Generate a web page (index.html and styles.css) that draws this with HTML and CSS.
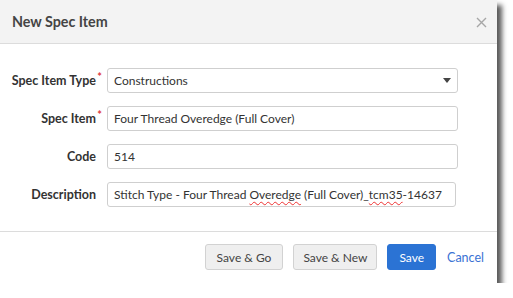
FILE: index.html
```html
<!DOCTYPE html>
<html lang="en">
<head>
    <meta charset="UTF-8">
    <meta name="viewport" content="width=device-width, initial-scale=1.0">
    <title>New Spec Item</title>
    <link rel="stylesheet" href="styles.css">
</head>
<body>
    <div class="dialog">
        <div class="dialog-header">
            <div class="dialog-title">New Spec Item</div>
            <div class="close" title="Close">
                <svg width="11" height="11" viewBox="0 0 11 11">
                    <path d="M1 1 L10 10 M10 1 L1 10" stroke="#a6a6a6" stroke-width="1.4" fill="none"/>
                </svg>
            </div>
        </div>
        <div class="dialog-body">
            <label class="label required">Spec Item Type</label>
            <div class="select">
                <span>Constructions</span>
                <span class="caret"></span>
            </div>

            <label class="label required">Spec Item</label>
            <input class="field" type="text" value="Four Thread Overedge (Full Cover)">

            <label class="label">Code</label>
            <input class="field" type="text" value="514">

            <label class="label">Description</label>
            <div class="field field-desc">Stitch Type - Four Thread <span class="misspelled">Overedge</span> (Full Cover)_<span class="misspelled">tcm35</span>-14637</div>
        </div>
        <div class="dialog-footer">
            <div class="btn">Save &amp; Go</div>
            <div class="btn btn-new">Save &amp; New</div>
            <div class="btn btn-primary">Save</div>
            <a class="cancel" href="#">Cancel</a>
        </div>
    </div>
</body>
</html>
```

FILE: styles.css
```css
body {
    margin: 0;
    background-color: #fff;
    font-family: Lato, "Open Sans", Arial, sans-serif;
    color: #333;
}
.dialog {
    width: 497px;
    height: 283px;
    background-color: #fff;
    box-shadow: 5px 5px 5px rgba(0, 0, 0, 0.65); /* hard shadow bottom-right */
    display: flex;
    flex-direction: column;
}
.dialog-header {
    height: 43px;
    background-color: #f3f3f3;
    border-bottom: 1px solid #dcdcdc;
    display: flex;
    align-items: center;
    justify-content: space-between;
    padding: 0 10px 0 12px;
}
.dialog-title {
    font-size: 14.3px;
    font-weight: bold;
    color: #444;
}
.close {
    display: flex;
    margin-top: 1px;
}
.dialog-body {
    display: grid;
    grid-template-columns: 96px minmax(0, 1fr);
    column-gap: 11px;
    row-gap: 13px;
    align-items: center;
    padding: 24px 39px 24px 0;
    border-bottom: 1px solid #dcdcdc;
}
.label {
    text-align: right;
    font-size: 12.5px;
    font-weight: bold;
    color: #333;
}
.label.required {
    position: relative;
}
.label.required::after {
    content: "*";
    position: absolute;
    right: -6px;
    top: -3px;
    color: #e0393e;
    font-size: 11px;
}
.field,
.select {
    box-sizing: border-box;
    height: 25px;
    width: 100%;
    margin: 0;
    border: 1px solid #cfcfcf;
    border-radius: 3px;
    padding: 0 6px;
    font-family: inherit;
    font-size: 12px;
    color: #333;
    background-color: #fff;
    outline: none;
}
.select {
    display: flex;
    align-items: center;
    justify-content: space-between;
}
.caret {
    width: 0;
    height: 0;
    border-left: 4px solid transparent;
    border-right: 4px solid transparent;
    border-top: 5px solid #444;
}
.field-desc {
    display: flex;
    align-items: center;
    width: calc(100% - 2px);
    white-space: pre;
    overflow: hidden;
}
.misspelled {
    text-decoration: underline wavy #e33;
    text-decoration-thickness: 1px;
    text-underline-offset: 2px;
}
.dialog-footer {
    flex: 1;
    display: flex;
    justify-content: flex-end;
    align-items: flex-start;
    gap: 10px;
    padding: 12px 13px 0 0;
}
.btn {
    box-sizing: border-box;
    height: 26px;
    padding: 0 11px;
    display: flex;
    align-items: center;
    font-size: 12px;
    color: #444;
    background-color: #efefef;
    border: 1px solid #d2d2d2;
    border-radius: 3px;
}
.btn-new {
    padding: 0 9px;
}
.btn-primary {
    background-color: #2b73d4;
    border-color: #2b73d4;
    color: #fff;
    padding: 0 11px;
}
.cancel {
    font-size: 12.5px;
    color: #3a72d4;
    text-decoration: none;
    margin-top: 6px;
    margin-left: 1px;
}
```
